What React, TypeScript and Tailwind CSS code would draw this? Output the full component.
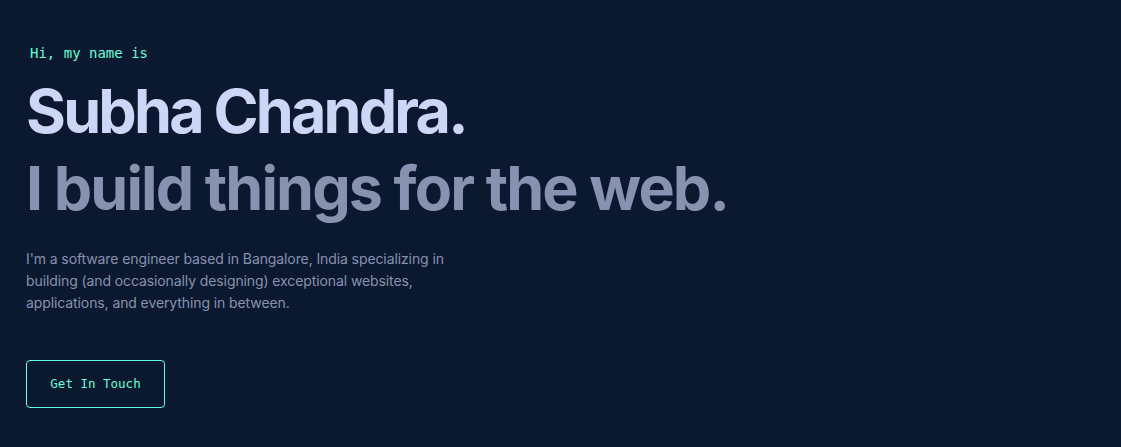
import React from "react";

export default function App() {
  return (
    <div className="w-full h-[447px] bg-[#0a192f] overflow-hidden">
      <section className="flex flex-col items-start pl-[26px] pt-[43px]">
        <h1 className="ml-[4px] text-[14px] leading-[20px] text-[#64ffda] font-['DejaVu_Sans_Mono',monospace]">
          Hi, my name is
        </h1>
        <h2 className="mt-[10px] text-[61px] leading-[77px] font-bold text-[#ccd6f6] tracking-[-2.8px] font-['Inter',sans-serif]">
          Subha Chandra.
        </h2>
        <h3 className="text-[61px] leading-[77px] font-bold text-[#8892b0] tracking-[-1.9px] font-['Inter',sans-serif]">
          I build things for the web.
        </h3>
        <p className="mt-[21px] w-[440px] text-[14px] leading-[22px] tracking-[-0.1px] text-[#8892b0] font-['Inter',sans-serif]">
          I'm a software engineer based in Bangalore, India specializing in building (and occasionally designing) exceptional websites, applications, and everything in between.
        </p>
        <a
          href="#"
          className="mt-[46px] flex items-center justify-center w-[139px] h-[48px] border border-[#64ffda] rounded-[4px] text-[12.5px] text-[#64ffda] font-['DejaVu_Sans_Mono',monospace]"
        >
          Get In Touch
        </a>
      </section>
    </div>
  );
}
